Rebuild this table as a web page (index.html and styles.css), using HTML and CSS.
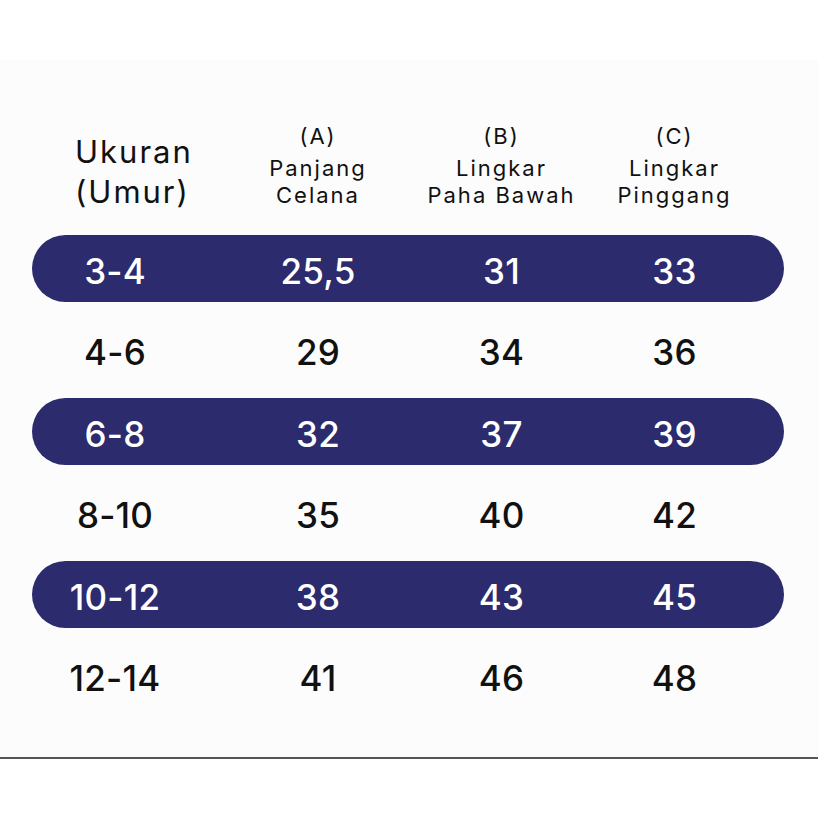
FILE: index.html
```html
<!DOCTYPE html>
<html lang="id">
<head>
<meta charset="utf-8">
<title>Ukuran Celana</title>
<link rel="stylesheet" href="styles.css">
</head>
<body>
<div class="top"></div>
<main class="panel">
  <div class="table">
    <div class="head">
      <div class="h-first">Ukuran<br>(Umur)</div>
      <div class="h-col"><span class="h-letter">(A)</span><span>Panjang</span><span>Celana</span></div>
      <div class="h-col"><span class="h-letter">(B)</span><span>Lingkar</span><span>Paha Bawah</span></div>
      <div class="h-col"><span class="h-letter">(C)</span><span>Lingkar</span><span>Pinggang</span></div>
    </div>
    <div class="rows">
      <div class="row band"><span>3-4</span><span>25,5</span><span>31</span><span>33</span></div>
      <div class="row"><span>4-6</span><span>29</span><span>34</span><span>36</span></div>
      <div class="row band"><span>6-8</span><span>32</span><span>37</span><span>39</span></div>
      <div class="row"><span>8-10</span><span>35</span><span>40</span><span>42</span></div>
      <div class="row band"><span>10-12</span><span>38</span><span>43</span><span>45</span></div>
      <div class="row"><span>12-14</span><span>41</span><span>46</span><span>48</span></div>
    </div>
  </div>
</main>
<div class="rule"></div>
</body>
</html>
```
FILE: styles.css
```css
html, body {
  margin: 0;
  padding: 0;
  background: #ffffff;
}
body {
  font-family: "Inter", "Liberation Sans", sans-serif;
  color: #111111;
  width: 818px;
  height: 818px;
  overflow: hidden;
}
.top {
  height: 60px;
}
.panel {
  height: 697px;
  background: #fcfcfc;
  box-sizing: border-box;
  padding: 0 34px 0 32px;
}
.table {
  display: flex;
  flex-direction: column;
}
.head,
.row {
  display: grid;
  grid-template-columns: 166px 240px 127px 1fr;
}
.head {
  height: 175px;
  align-items: end;
  padding-bottom: 26px;
  box-sizing: border-box;
}
.h-first {
  padding-left: 43px;
  font-size: 31px;
  line-height: 40px;
  letter-spacing: 2px;
  margin-bottom: -3px;
}
.h-col {
  display: flex;
  flex-direction: column;
  align-items: center;
  font-size: 22px;
  line-height: 27px;
  letter-spacing: 2px;
  white-space: nowrap;
}
.h-letter {
  margin-bottom: 5px;
}
.rows {
  display: flex;
  flex-direction: column;
  gap: 14.4px;
}
.row {
  height: 67px;
  align-items: center;
  font-size: 35px;
  font-weight: 500;
  letter-spacing: 0.2px;
  border-radius: 34px;
}
.row span {
  text-align: center;
  padding-top: 5px;
}
.band {
  background: #2b2b6e;
  color: #ffffff;
}
.rule {
  height: 2px;
  background: #555555;
}
```
